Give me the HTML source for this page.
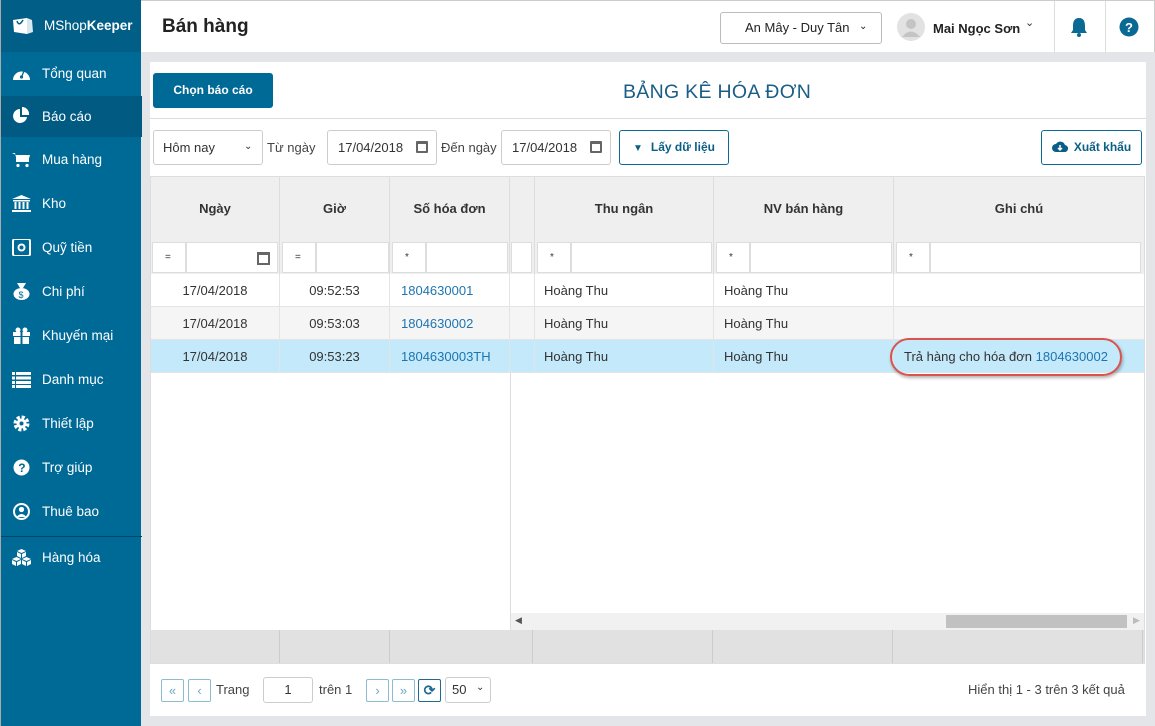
<!DOCTYPE html>
<html><head><meta charset="utf-8"><style>
*{box-sizing:border-box;margin:0;padding:0}
body{width:1155px;height:726px;overflow:hidden;font-family:"Liberation Sans",Arial,sans-serif;font-size:13px;color:#333;background:#e4e5e9;position:relative}
.abs{position:absolute}
#side{left:0;top:0;width:141px;height:726px;background:#006a96;border-left:1px solid #aaa}
#brand{left:0;top:0;width:141px;height:52px;background:#005e87}
.mi{position:absolute;left:0;width:141px;height:44px;color:#fff;font-size:13.5px;line-height:44px;padding-left:41px}
.mi .ic{position:absolute;left:11px;top:13px;width:19px;height:17px}
#hdr{left:141px;top:0;width:1014px;height:52px;background:#fff;border-top:1px solid #ccc;border-right:1px solid #ccc}
#panel{left:150px;top:62px;width:996px;height:654px;background:#fff}
.btn{position:absolute;border:1px solid #0b6a93;border-radius:3px;color:#0b5f86;font-weight:bold;font-size:12px;background:#fff;text-align:center}
.inp{position:absolute;border:1px solid #ccc;border-radius:3px;background:#fff;font-size:13px;color:#333}
.th{position:absolute;top:177px;height:64px;background:#efefef;border-right:1px solid #ddd;text-align:center;line-height:64px;font-weight:bold;color:#333;font-size:13px}
.fc{position:absolute;top:241px;height:33px;background:#efefef;border-right:1px solid #ddd}
.fc .a,.fc .b{position:absolute;top:1px;height:31px;background:#fff;border:1px solid #ddd;font-size:10px;line-height:30px;padding-left:12px}
.row{position:absolute;left:151px;width:993px;height:33px;border-bottom:1px solid #e4e4e4}
.c{position:absolute;top:0;height:33px;line-height:33px;border-right:1px solid #e4e4e4;font-size:13px}
.lnk{color:#1d75b0}
.pb{position:absolute;top:679px;width:23px;height:23px;border:1px solid #8cbcd2;border-radius:2px;color:#6aa5c2;text-align:center;line-height:21px;font-size:13px;background:#fff}
</style></head><body>
<div id="side" class="abs">
 <div id="brand" class="abs">
  <svg class="abs" style="left:11px;top:15px" width="22" height="20" viewBox="0 0 22 20"><path d="M1 5 L15 3 L15 19 L2 17 Z" fill="#fff"/><path d="M15 3 L20 5 L21 17 L15 19Z" fill="#d8e8f0"/><path d="M5 6 Q7 12 11 5" stroke="#005e87" stroke-width="1.5" fill="none"/></svg>
  <div class="abs" style="left:43px;top:18px;color:#fff;font-size:13.5px">MShop<b>Keeper</b></div>
 </div>
 <div class="mi" style="top:52px"><svg class="ic" viewBox="0 0 19 17"><path d="M1 15 A8.5 8.5 0 1 1 18 15 Z" fill="#fff"/><circle cx="9.5" cy="12" r="1.6" fill="#006a96"/><path d="M9.5 12 L12 6" stroke="#006a96" stroke-width="1.3"/></svg>Tổng quan</div>
 <div class="mi" style="top:96px;height:41px;background:#005a82;line-height:41px"><svg class="ic" style="top:11px" viewBox="0 0 19 17"><path d="M8 2 A7 7 0 1 0 15 10 L8 10Z" fill="#fff"/><path d="M10 0 A7 7 0 0 1 17 8 L10 8Z" fill="#fff"/></svg>Báo cáo</div>
 <div class="mi" style="top:138px"><svg class="ic" viewBox="0 0 19 17"><path d="M0 2 H3 L5 11 H16 L18 4 H4" fill="#fff"/><rect x="4" y="4" width="13" height="7" fill="#fff"/><circle cx="6" cy="14.5" r="1.6" fill="#fff"/><circle cx="15" cy="14.5" r="1.6" fill="#fff"/></svg>Mua hàng</div>
 <div class="mi" style="top:182px"><svg class="ic" viewBox="0 0 19 17"><path d="M9.5 0 L19 4 H0Z" fill="#fff"/><rect x="1" y="5" width="17" height="1.5" fill="#fff"/><rect x="2.5" y="7" width="2" height="7" fill="#fff"/><rect x="6.5" y="7" width="2" height="7" fill="#fff"/><rect x="10.5" y="7" width="2" height="7" fill="#fff"/><rect x="14.5" y="7" width="2" height="7" fill="#fff"/><rect x="0" y="15" width="19" height="2" fill="#fff"/></svg>Kho</div>
 <div class="mi" style="top:226px"><svg class="ic" viewBox="0 0 19 17"><rect x="1" y="0" width="17" height="17" rx="2" fill="none" stroke="#fff" stroke-width="2"/><circle cx="9.5" cy="8.5" r="3" fill="none" stroke="#fff" stroke-width="2"/></svg>Quỹ tiền</div>
 <div class="mi" style="top:270px"><svg class="ic" viewBox="0 0 19 17"><ellipse cx="9.5" cy="11" rx="8" ry="6" fill="#fff"/><path d="M5 0 L14 0 L11 5 H8Z" fill="#fff"/><text x="6.5" y="15" font-size="9" fill="#006a96" font-family="Liberation Sans">$</text></svg>Chi phí</div>
 <div class="mi" style="top:314px"><svg class="ic" viewBox="0 0 19 17"><rect x="1" y="5" width="17" height="4" fill="#fff"/><rect x="2" y="10" width="15" height="7" fill="#fff"/><rect x="8.5" y="5" width="2" height="12" fill="#006a96"/><circle cx="6" cy="3" r="2.5" fill="#fff"/><circle cx="13" cy="3" r="2.5" fill="#fff"/></svg>Khuyến mại</div>
 <div class="mi" style="top:358px"><svg class="ic" viewBox="0 0 19 17"><g fill="#fff"><rect x="0" y="1" width="3" height="3"/><rect x="4" y="1" width="15" height="3"/><rect x="0" y="5.5" width="3" height="3"/><rect x="4" y="5.5" width="15" height="3"/><rect x="0" y="10" width="3" height="3"/><rect x="4" y="10" width="15" height="3"/><rect x="0" y="14" width="3" height="3"/><rect x="4" y="14" width="15" height="3"/></g></svg>Danh mục</div>
 <div class="mi" style="top:402px"><svg class="ic" viewBox="0 0 19 17"><circle cx="9.5" cy="8.5" r="6" fill="none" stroke="#fff" stroke-width="4" stroke-dasharray="3 1.7"/><circle cx="9.5" cy="8.5" r="5" fill="#fff"/><circle cx="9.5" cy="8.5" r="2" fill="#006a96"/></svg>Thiết lập</div>
 <div class="mi" style="top:446px"><svg class="ic" viewBox="0 0 19 17"><circle cx="9.5" cy="8.5" r="8" fill="#fff"/><text x="6.3" y="13" font-size="12" font-weight="bold" fill="#006a96" font-family="Liberation Sans">?</text></svg>Trợ giúp</div>
 <div class="mi" style="top:490px"><svg class="ic" viewBox="0 0 19 17"><circle cx="9.5" cy="8.5" r="7.5" fill="none" stroke="#fff" stroke-width="2"/><circle cx="9.5" cy="6.5" r="2.6" fill="#fff"/><path d="M4.5 14 Q9.5 8 14.5 14" fill="#fff"/></svg>Thuê bao</div>
 <div class="abs" style="left:0;top:536px;width:141px;height:1px;background:#00466a"></div>
 <div class="mi" style="top:536px"><svg class="ic" viewBox="0 0 19 17"><g fill="#fff"><path d="M9.5 0 L14 2 L9.5 4 L5 2Z"/><path d="M5 3 L9 5 V9 L5 7Z"/><path d="M14 3 L10 5 V9 L14 7Z"/><path d="M4.5 8 L9 10 L4.5 12 L0 10Z"/><path d="M0 11 L4 13 V17 L0 15Z"/><path d="M9 11 L5 13 V17 L9 15Z"/><path d="M14.5 8 L19 10 L14.5 12 L10 10Z"/><path d="M10 11 L14 13 V17 L10 15Z"/><path d="M19 11 L15 13 V17 L19 15Z"/></g></svg>Hàng hóa</div>
</div>
<div id="hdr" class="abs">
 <div class="abs" style="left:21px;top:15px;font-size:19px;font-weight:bold;color:#222">Bán hàng</div>
 <div class="abs" style="left:579px;top:11px;width:162px;height:32px;border:1px solid #bbb;border-radius:3px;font-size:13px;line-height:30px;padding-left:24px;color:#222">An Mây - Duy Tân <span style="position:absolute;left:138px;top:-1px;font-size:10px">&#8964;</span></div>
 <svg class="abs" style="left:756px;top:12px" width="28" height="28" viewBox="0 0 28 28"><circle cx="14" cy="14" r="14" fill="#e2e2e2"/><circle cx="14" cy="11" r="5" fill="#c4c4c4"/><path d="M5 24 Q14 13 23 24 Z" fill="#c4c4c4"/></svg>
 <div class="abs" style="left:792px;top:20px;font-size:13px;font-weight:bold;color:#222">Mai Ngọc Sơn</div>
 <div class="abs" style="left:884px;top:15px;font-size:11px">&#8964;</div>
 <div class="abs" style="left:913px;top:0;width:1px;height:52px;background:#ddd"></div>
 <div class="abs" style="left:964px;top:0;width:1px;height:52px;background:#ddd"></div>
 <svg class="abs" style="left:929px;top:16px" width="18" height="20" viewBox="0 0 18 20"><path d="M9 1 C4 1 3 5 3 9 V13 L1 16 H17 L15 13 V9 C15 5 14 1 9 1Z" fill="#0b6a93"/><circle cx="9" cy="18" r="2" fill="#0b6a93"/></svg>
 <svg class="abs" style="left:978px;top:16px" width="20" height="20" viewBox="0 0 20 20"><circle cx="10" cy="10" r="9.5" fill="#0b6a93"/><text x="6" y="15" font-size="13" font-weight="bold" fill="#fff" font-family="Liberation Sans">?</text></svg>
</div>
<div id="panel" class="abs"></div>
<div class="abs" style="left:153px;top:73px;width:120px;height:35px;background:#006a96;border-radius:3px;color:#fff;font-weight:bold;font-size:12px;text-align:center;line-height:35px">Chọn báo cáo</div>
<div class="abs" style="left:623px;top:81px;font-size:19.5px;color:#1a5d86;letter-spacing:.3px">BẢNG KÊ HÓA ĐƠN</div>
<div class="abs" style="left:150px;top:118px;width:996px;height:1px;background:#ddd"></div>
<div class="inp" style="left:153px;top:130px;width:110px;height:35px;line-height:33px;padding-left:9px">Hôm nay<span style="position:absolute;left:90px;top:-1px;font-size:10px">&#8964;</span></div>
<div class="abs" style="left:267px;top:140px;color:#444">Từ ngày</div>
<div class="inp" style="left:327px;top:130px;width:110px;height:35px;line-height:33px;padding-left:10px">17/04/2018<span style="position:absolute;left:88px;top:10px;width:12px;height:12px;border:2px solid #666;border-top-width:3px;border-radius:1px"></span></div>
<div class="abs" style="left:441px;top:140px;color:#444">Đến ngày</div>
<div class="inp" style="left:501px;top:130px;width:110px;height:35px;line-height:33px;padding-left:10px">17/04/2018<span style="position:absolute;left:88px;top:10px;width:12px;height:12px;border:2px solid #666;border-top-width:3px;border-radius:1px"></span></div>
<div class="btn" style="left:619px;top:130px;width:110px;height:35px;line-height:33px"><span style="font-size:10px;margin-right:8px">&#9660;</span>Lấy dữ liệu</div>
<div class="btn" style="left:1041px;top:130px;width:101px;height:35px;line-height:33px"><svg width="16" height="11" viewBox="0 0 16 11" style="vertical-align:-1px;margin-right:6px"><path d="M4 11 A4 4 0 0 1 4 3 A5 5 0 0 1 13 4 A3.5 3.5 0 0 1 12 11Z" fill="#0b5f86"/><path d="M8 4 V9 M6 7 L8 9 L10 7" stroke="#fff" stroke-width="1.5" fill="none"/></svg>Xuất khẩu</div>
<div class="abs" style="left:150px;top:176px;width:995px;height:488px;border:1px solid #ddd;background:#fff"></div>
<div class="th" style="left:151px;width:129px">Ngày</div>
<div class="th" style="left:280px;width:110px">Giờ</div>
<div class="th" style="left:390px;width:120px">Số hóa đơn</div>
<div class="th" style="left:510px;width:25px"></div>
<div class="th" style="left:535px;width:179px">Thu ngân</div>
<div class="th" style="left:714px;width:180px">NV bán hàng</div>
<div class="th" style="left:894px;width:250px;border-right:none">Ghi chú</div>
<div class="fc" style="left:151px;width:129px"><div class="a" style="left:1px;width:34px">=</div><div class="b" style="left:35px;width:92px"><span style="position:absolute;left:70px;top:9px;width:13px;height:13px;border:2px solid #666;border-top-width:3px"></span></div></div>
<div class="fc" style="left:280px;width:110px"><div class="a" style="left:2px;width:34px">=</div><div class="b" style="left:36px;width:73px"></div></div>
<div class="fc" style="left:390px;width:120px"><div class="a" style="left:2px;width:34px">*</div><div class="b" style="left:36px;width:82px"></div></div>
<div class="fc" style="left:510px;width:25px"><div class="a" style="left:1px;width:21px;padding:0"></div></div>
<div class="fc" style="left:535px;width:179px"><div class="a" style="left:2px;width:34px">*</div><div class="b" style="left:36px;width:141px"></div></div>
<div class="fc" style="left:714px;width:180px"><div class="a" style="left:2px;width:34px">*</div><div class="b" style="left:36px;width:142px"></div></div>
<div class="fc" style="left:894px;width:250px;border-right:none"><div class="a" style="left:2px;width:34px">*</div><div class="b" style="left:36px;width:211px"></div></div>

<div class="row" style="top:274px;background:#fff">
 <div class="c" style="left:0;width:129px;text-align:center">17/04/2018</div><div class="c" style="left:129px;width:110px;text-align:center">09:52:53</div><div class="c lnk" style="left:239px;width:120px;padding-left:11px">1804630001</div><div class="c" style="left:359px;width:25px"></div><div class="c" style="left:384px;width:179px;padding-left:9px">Hoàng Thu</div><div class="c" style="left:563px;width:180px;padding-left:10px">Hoàng Thu</div>
</div>
<div class="row" style="top:307px;background:#f5f5f5">
 <div class="c" style="left:0;width:129px;text-align:center">17/04/2018</div><div class="c" style="left:129px;width:110px;text-align:center">09:53:03</div><div class="c lnk" style="left:239px;width:120px;padding-left:11px">1804630002</div><div class="c" style="left:359px;width:25px"></div><div class="c" style="left:384px;width:179px;padding-left:9px">Hoàng Thu</div><div class="c" style="left:563px;width:180px;padding-left:10px">Hoàng Thu</div>
</div>
<div class="row" style="top:340px;background:#c3e9fa">
 <div class="c" style="left:0;width:129px;text-align:center">17/04/2018</div><div class="c" style="left:129px;width:110px;text-align:center">09:53:23</div><div class="c lnk" style="left:239px;width:120px;padding-left:11px">1804630003TH</div><div class="c" style="left:359px;width:25px"></div><div class="c" style="left:384px;width:179px;padding-left:9px">Hoàng Thu</div><div class="c" style="left:563px;width:180px;padding-left:10px">Hoàng Thu</div>
 <div class="c" style="left:753px;width:230px;border:none">Trả hàng cho hóa đơn <span class="lnk">1804630002</span></div>
</div>
<div class="abs" style="left:890px;top:338px;width:232px;height:38px;border:2px solid #d9534f;border-radius:19px;box-shadow:1px 2px 3px rgba(0,0,0,.3)"></div>
<div class="abs" style="left:510px;top:373px;width:1px;height:257px;background:#ddd"></div>
<div class="abs" style="left:511px;top:613px;width:633px;height:17px;background:#f1f1f1"></div>
<div class="abs" style="left:946px;top:615px;width:181px;height:13px;background:#c1c1c1"></div>
<div class="abs" style="left:515px;top:615px;font-size:9px;color:#555">&#9664;</div>
<div class="abs" style="left:1133px;top:615px;font-size:9px;color:#bbb">&#9654;</div>
<div class="abs" style="left:151px;top:630px;width:993px;height:33px;background:#e1e1e1"></div>
<div class="abs" style="left:279px;top:630px;width:1px;height:33px;background:#ccc"></div>
<div class="abs" style="left:389px;top:630px;width:1px;height:33px;background:#ccc"></div>
<div class="abs" style="left:532px;top:630px;width:1px;height:33px;background:#ccc"></div>
<div class="abs" style="left:712px;top:630px;width:1px;height:33px;background:#ccc"></div>
<div class="abs" style="left:892px;top:630px;width:1px;height:33px;background:#ccc"></div>
<div class="abs" style="left:1142px;top:630px;width:1px;height:33px;background:#ccc"></div>
<div class="pb" style="left:161px">«</div>
<div class="pb" style="left:188px">‹</div>
<div class="abs" style="left:216px;top:682px;color:#444">Trang</div>
<div class="inp" style="left:263px;top:677px;width:50px;height:26px;line-height:24px;text-align:center">1</div>
<div class="abs" style="left:319px;top:682px;color:#444">trên 1</div>
<div class="pb" style="left:366px">›</div>
<div class="pb" style="left:392px">»</div>
<div class="pb" style="left:418px;border-color:#1d6a92;color:#1d6a92;font-size:14px;font-weight:bold">&#10227;</div>
<div class="inp" style="left:445px;top:677px;width:46px;height:26px;line-height:24px;padding-left:6px">50<span style="position:absolute;left:30px;top:-2px;font-size:10px">&#8964;</span></div>
<div class="abs" style="left:968px;top:682px;color:#444">Hiển thị 1 - 3 trên 3 kết quả</div>
</body></html>
